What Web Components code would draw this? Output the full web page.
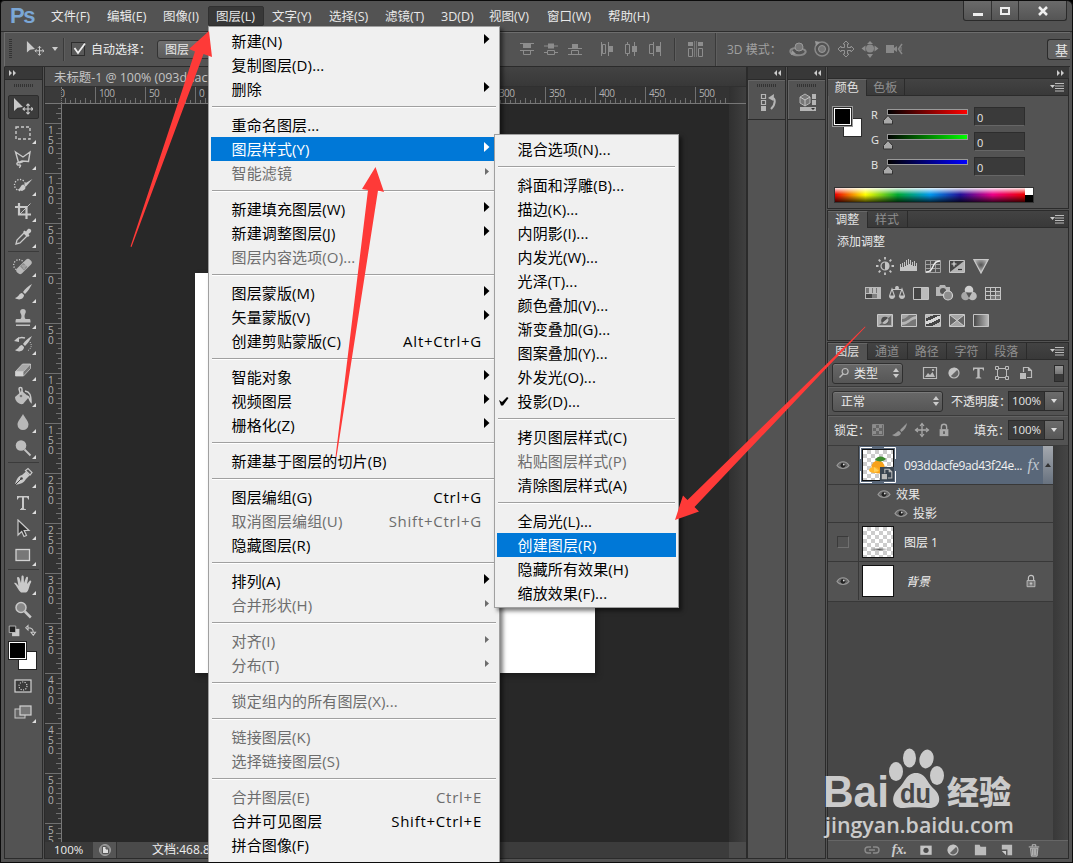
<!DOCTYPE html>
<html lang="zh-CN">
<head>
<meta charset="utf-8">
<title>Photoshop</title>
<style>
  html, body { margin: 0; padding: 0; background: #000; overflow: hidden; }
  body { font-family: "Open Sans", "Noto Sans CJK SC", sans-serif; font-size: 12px; color: #e8e8e8; }
</style>
</head>
<body>
<ps-app></ps-app>

<script>
// Icon bodies. Tools use a 20 unit box, everything else 16.
const ICONS = {
  move: [20, '<path d="M1 1v13l3.5-3.2L10 10z" fill="#c9c9c9"/><path d="M15 7v10M10 12h10M13.3 8.7 15 7l1.7 1.7M13.3 15.3 15 17l1.7-1.7M11.7 10.3 10 12l1.7 1.7M18.3 10.3 20 12l-1.7 1.7" fill="none" stroke="#c9c9c9" stroke-width="1.1"/>'],
  marquee: [20, '<rect x="3" y="4" width="14" height="12" fill="none" stroke="#c9c9c9" stroke-width="1.4" stroke-dasharray="3 2"/>'],
  lasso: [20, '<path d="M2.500 3l7.500 5 7-5-1.500 9.500-6.500-.5-3.500 1.500zM5.500 13.500c-2.500 0-2 3 .5 2.500s1.500 2 0 2.500M6 14l4-1.500" fill="none" stroke="#c9c9c9" stroke-width="1.400"/>'],
  quick: [20, '<circle cx="7" cy="10" r="5.5" fill="none" stroke="#d0d0d0" stroke-width="1.3" stroke-dasharray="1.3 1.5"/><path d="M19.500 4l-8.500 5 2 2.500zM10.500 9.500c-3 0-2.500 4-6 5.500 4 1.500 8 1 8-3.500z" fill="#c9c9c9"/>'],
  crop: [20, '<path d="M6 2v11.500h12M2 6h11.500v12" fill="none" stroke="#c9c9c9" stroke-width="2.200"/><path d="M7 13L17.500 2.500" stroke="#c9c9c9" stroke-width=".900"/>'],
  dropper: [20, '<path d="M3 17l1-4 7-7 3 3-7 7z" fill="none" stroke="#c9c9c9" stroke-width="1.3"/><path d="M10 5l1.500-1.500 1.500 1 2-2.500c2-1 4 1 3 3l-2.500 2 1 1.500L15 10z" fill="#c9c9c9"/>'],
  heal: [20, '<circle cx="6" cy="9" r="5.300" fill="none" stroke="#d0d0d0" stroke-width="1.200" stroke-dasharray="1.200 1.500"/><rect x="2" y="7" width="18" height="7" rx="3" transform="rotate(-44 11 10.500)" fill="#b8b8b8"/><path d="M10.500 7l4 4-3.500 3.500-4-4z" fill="#8d8d8d"/><path d="M10 9.500v1M12 9.500v1M11 11.500v1" stroke="#ddd"/>'],
  brush: [20, '<path d="M19 2c-4 2-7 5-9 8l2 2c3-3 5-6 7-10zM9 11c-3 0-3 4-7 5 4 3 9 1 9-3z" fill="#c9c9c9"/>'],
  stamp: [20, '<path d="M10 1c3 0 3.500 3 2 5-.8 2-.5 4 .5 5h4c1 0 1 2 1 3.500h-15c0-1.500 0-3.500 1-3.500h4c1-1 1.300-3 .5-5-1.500-2-1-5 2-5zM3 16.500h14V18H3z" fill="#bfbfbf"/>'],
  history: [20, '<path d="M19 2c-4 2-7 5-9 8l2 2c3-3 5-6 7-10zM9 11c-3 0-3 4-7 5 4 3 9 1 9-3z" fill="#c9c9c9"/><path d="M3 6c3-3 6-3 9-2" fill="none" stroke="#c9c9c9" stroke-width="1.500"/><path d="M1 7l5-4v5z" fill="#c9c9c9"/><path d="M17 8c3 4 0 8-3 9" fill="none" stroke="#c9c9c9" stroke-dasharray="1 1.200"/>'],
  eraser: [20, '<path d="M2.500 11.500l7-7.500h8l-7 7.500z" fill="#a8a8a8"/><path d="M10.500 11.500l7-7.500v4.500l-7 7.500z" fill="#777"/><path d="M2.500 11.500h8V16h-8z" fill="#d2d2d2"/><path d="M2.500 11.500l7-7.500h8v4.500l-7 7.500h-8zM2.500 11.500h8l7-7.500" fill="none" stroke="#d6d6d6" stroke-width=".700"/>'],
  bucket: [20, '<path d="M2 11l7-6 7 6-6 7c-4 1-8-3-8-7z" fill="#bdbdbd"/><path d="M8 10L6 3c0-2 3-2 3 0v4M12 5c5 1 6 4 6 11-2-2-1-5-4-6" fill="none" stroke="#c9c9c9" stroke-width="1.500"/><circle cx="8" cy="10" r="1.300" fill="#777"/>'],
  drop: [20, '<path d="M10 2c2 4 5.500 7 5.500 10.500a5.500 5.500 0 0 1-11 0C4.500 9 8 6 10 2z" fill="#b8b8b8"/>'],
  dodge: [20, '<circle cx="8" cy="7.500" r="5.300" fill="#bdbdbd"/><path d="M11.500 11.500l6 6" stroke="#c4c4c4" stroke-width="1.800"/>'],
  pen: [20, '<path d="M2 18c1-5 3-9 7-10l4-3.500 3.500 4L13 12c-2 4-6 5-11 6z" fill="#c9c9c9"/><path d="M2 18l6-6" stroke="#444"/><circle cx="8.500" cy="11.500" r="1.300" fill="#444"/><path d="M12.500 3.500l4.500 4.500 2-2.500-4-4z" fill="#555" stroke="#c9c9c9" stroke-width="1.200"/>'],
  type: [20, '<path d="M4 3h12v3.500h-.9c-.3-1.500-.9-2-2.200-2H11v10.600c0 .9.500 1.100 2 1.200v.7H7v-.7c1.500-.1 2-.3 2-1.200V4.500H7.100c-1.300 0-1.900.5-2.200 2H4z" fill="#c9c9c9"/>'],
  path: [20, '<path d="M5 1v15l3.700-3.500 2.300 5 2.500-1-2.300-5H16z" fill="#333" stroke="#c9c9c9" stroke-width="1.200"/>'],
  rect: [20, '<rect x="3" y="4.500" width="13.500" height="11" fill="#777" stroke="#d2d2d2" stroke-width="1.300"/>'],
  hand: [20, '<path d="M1 9c2-1 3 1 4.500 3L4 4c0-1.500 2-1.500 2.500 0L8 9l.5-6.500c0-1.500 2-1.500 2.200 0L11 9l2-5.500c.6-1.400 2.400-.8 2 1L14 10l2.500-3c1-1 2.300 0 1.500 1.500-2 3-2 9-5 10H8C5 16 4 12 1 9z" fill="#c9c9c9"/>'],
  zoom: [20, '<circle cx="8" cy="7.500" r="5" fill="#888" stroke="#c9c9c9" stroke-width="1.500"/><path d="M11.800 11.500l6 6" stroke="#c9c9c9" stroke-width="2.500"/>'],
  mask: [20, '<rect x="2" y="4" width="16" height="12" fill="#3a3a3a" stroke="#d2d2d2" stroke-width="1.200"/><circle cx="10" cy="10" r="4" fill="none" stroke="#ddd" stroke-width="1.100" stroke-dasharray="1.100 1.400"/>'],
  screen: [20, '<rect x="2" y="7" width="10" height="9" fill="#666" stroke="#c9c9c9"/><rect x="7" y="4" width="11" height="9" fill="#777" stroke="#d2d2d2" stroke-width="1.200"/>'],
  mini: [16, '<path d="M5 6h9v9H5z" fill="#c9c9c9"/><path d="M1.500 2.500h8v8h-8z" fill="#222" stroke="#c9c9c9"/>'],
  swap: [16, '<path d="M4 5c5 0 7 2 7 6M4 2L1 5l3 3zM8 11h6l-3 4z" fill="none" stroke="#c9c9c9" stroke-width="1.400"/>'],

  sun: [18, '<circle cx="9" cy="9" r="4" fill="none" stroke="#c4c4c4" stroke-width="1.200"/><path d="M9 5a4 4 0 0 1 0 8z" fill="#c4c4c4"/><path d="M9 0v2.500M9 15.500V18M0 9h2.500M15.500 9H18M2.700 2.700l1.700 1.700M13.600 13.600l1.700 1.700M2.700 15.300l1.700-1.700M13.600 4.400l1.700-1.700" stroke="#c4c4c4" stroke-width="1.800"/>'],
  levels: [18, '<path d="M0 14V7h1v3h1V6h1v4h1V5h1v4h1V3h1v5h1V2h1v5h1V3h1v5h1V5h1v4h1V4h1v5h1V6h1v8z" fill="#c4c4c4"/>'],
  curves: [16, '<path d="M.500 2.500h15v12H.500zM5.500 2.500v12M10.500 2.500v12M.500 6.500h15M.500 10.500h15" fill="none" stroke="#a2a2a2"/><path d="M1 14c9 0 5-11 14-11" fill="none" stroke="#eee" stroke-width="1.400"/>'],
  exposure: [16, '<path d="M.500 2.500h15v12H.500z" fill="#454545" stroke="#c4c4c4"/><path d="M15 3v11H1z" fill="#b5b5b5"/><path d="M2.500 6h5M5 3.500v5" stroke="#ddd" stroke-width="1.200"/><path d="M9 11.500h4" stroke="#333" stroke-width="1.200"/>'],
  vibrance: [16, '<defs><radialGradient id="v" cx=".5" cy=".4" r=".5"><stop stop-color="#555"/><stop offset="1" stop-color="#b5b5b5"/></radialGradient></defs><path d="M.800 1.500h14.400L8 15z" fill="url(#v)" stroke="#c9c9c9" stroke-width="1.200"/>'],
  hue: [16, '<path d="M0 2h16v12H0z" fill="#bbb"/><path d="M1 3h3v5H1zM7 3h1v5H7zM11 3h1v5h-1z" fill="#777"/><path d="M1 9h6v4H1z" fill="#444"/><path d="M7 9h5v4H7z" fill="#808080"/>'],
  balance: [16, '<path d="M8 1v3M3 4.500h10M3 4l-2.500 7h5zM13 4l-2.500 7h5z" fill="none" stroke="#c4c4c4" stroke-width="1.100"/><path d="M0 11h6c0 4-6 4-6 0zM10 11h6c0 4-6 4-6 0z" fill="#c4c4c4"/><circle cx="8" cy="3" r="2" fill="#c4c4c4"/>'],
  bw: [16, '<path d="M.500 2.500h15v12H.500z" fill="#444" stroke="#c4c4c4"/><path d="M8 3h7v11H8z" fill="#bbb"/>'],
  photo: [18, '<path d="M0 3h3l1-2h5l1 2h4v9H0z" fill="#b5b5b5"/><circle cx="7" cy="7" r="3" fill="#555"/><circle cx="12" cy="11.500" r="4.500" fill="#8d8d8d" stroke="#d4d4d4" stroke-width="1.200"/>'],
  mixer: [16, '<circle cx="8" cy="5" r="4.300" fill="#d0d0d0"/><circle cx="4.500" cy="11" r="4.300" fill="#a8a8a8"/><circle cx="11.500" cy="11" r="4.300" fill="#bcbcbc"/><path d="M5 7.500h6L8 13z" fill="#555"/>'],
  lookup: [16, '<path d="M0 2h16v13H0z" fill="#c4c4c4"/><path d="M1 3h4v3H1zM6 3h4v3H6zM11 3h4v3h-4zM1 7h4v3H1zM6 7h4v3H6zM1 11h4v3H1z" fill="#555"/><path d="M11 7h4v3h-4zM6 11h4v3H6zM11 11h4v3h-4z" fill="#777"/>'],
  invert: [16, '<path d="M.500 2.500h15v12H.500z" fill="#aaa" stroke="#c9c9c9"/><path d="M2 13L14 4v9z" fill="#666"/><circle cx="8" cy="8.500" r="3.800" fill="#4b4b4b"/><path d="M5 11l6-5a4 4 0 0 1-6 5" fill="#bbb"/>'],
  poster: [16, '<path d="M.500 2.500h15v12H.500z" fill="#777" stroke="#c9c9c9"/><path d="M1 10c6 0 8-5 14-6v3c-6 1-8 6-14 6z" fill="#b5b5b5"/><path d="M1 7c3 0 5-2 7-4H1z" fill="#a5a5a5"/>'],
  thresh: [16, '<path d="M.500 2.500h15v12H.500z" fill="#444" stroke="#c9c9c9"/><path d="M1 9h2V8h3V7h2V6h2V5h2V4h3v3h-2v1h-2v1H9v1H7v1H4v1H1z" fill="#d8d8d8"/><path d="M1 3h7v1H5v1H3v1H1z" fill="#bbb"/><path d="M15 10v4H8v-1h2v-1h2v-1h2v-1z" fill="#bbb"/>'],
  selcolor: [16, '<path d="M.500 2.500h15v12H.500z" fill="#a4a4a4" stroke="#c9c9c9"/><path d="M1 3l7 5.500L1 14zM15 3L8 8.500l7 5.500z" fill="#666"/><path d="M1 3l14 11M15 3L1 14" stroke="#ddd" stroke-width=".800"/>'],
  gradmap: [16, '<defs><linearGradient id="g"><stop stop-color="#444"/><stop offset="1" stop-color="#bbb"/></linearGradient></defs><path d="M.500 2.500h15v12H.500z" fill="url(#g)" stroke="#c4c4c4"/>'],

  search: [16, '<circle cx="9.500" cy="6" r="4" fill="none" stroke="#bbb" stroke-width="1.600"/><path d="M7 9l-5 5" stroke="#bbb" stroke-width="2"/>'],
  image: [16, '<path d="M1.500 2.500h13v11h-13z" fill="none" stroke="#bbb" stroke-width="1.200"/><path d="M3 12l3-4 2 2 2.500-3L13 12z" fill="#bbb"/><circle cx="11" cy="5" r="1.100" fill="#bbb"/>'],
  adjust: [16, '<circle cx="8" cy="8" r="5" fill="#666" stroke="#bdbdbd" stroke-width="1.200"/><path d="M4.200 11.800A5.400 5.400 0 0 1 11.800 4.200z" fill="#c4c4c4"/>'],
  smallT: [16, '<path d="M3 2.500h11v3h-.9c-.2-1.200-.8-1.500-1.800-1.500H9.700v7.600c0 .8.400 1 1.600 1.100v.8H5.700v-.8c1.200-.1 1.600-.3 1.600-1.100V4H5.700c-1 0-1.600.3-1.800 1.500H3z" fill="#bbb"/>'],
  shape: [16, '<path d="M3.500 3.500h9v9h-9z" fill="none" stroke="#bbb"/><path d="M1.500 1.500h3v3h-3zM11.500 1.500h3v3h-3zM1.500 11.500h3v3h-3zM11.500 11.500h3v3h-3z" fill="#535353" stroke="#bbb"/>'],
  smart: [16, '<path d="M5.500 7V2.500h5l3 3v7H9M10.500 2.500v3h3" fill="none" stroke="#bbb" stroke-width="1.200"/><path d="M2 8h6v6H2z" fill="#bbb"/>'],
  checker: [16, '<path d="M2.500 2.500h11v11h-11z" fill="#666" stroke="#888"/><path d="M3 3h3v3H3zM9 3h3v3H9zM6 6h3v3H6zM3 9h3v3H3zM9 9h3v3H9z" fill="#8d8d8d"/>'],
  lockbrush: [16, '<path d="M15 1L8 8l1.500 2c3-2 5-5 5.500-9zM7 9c-2 0-3 3-7 4 3 2 8 2 9-2z" fill="#999"/>'],
  lockmove: [16, '<path d="M8 2v12M2 8h12" stroke="#aaa" stroke-width="1.300"/><path d="M6 4l2-2.500L10 4M6 12l2 2.500 2-2.500M4 6L1.500 8 4 10M12 6l2.500 2-2.500 2" fill="none" stroke="#aaa" stroke-width="1.200"/>'],
  lock: [16, '<path d="M3 7h10v8H3z" fill="#aaa"/><path d="M5 7V4.500a3 3 0 0 1 6 0V7" fill="none" stroke="#aaa" stroke-width="1.600"/><path d="M8 9.500v3" stroke="#444" stroke-width="1.500"/>'],
  openlock: [16, '<path d="M3.500 7.500h9v7h-9z" fill="#777" stroke="#c4c4c4"/><path d="M5 7V4.500a3 3 0 0 1 6 0V7" fill="none" stroke="#c4c4c4" stroke-width="1.300"/><path d="M8 9v4M6.500 11h3" stroke="#ccc"/>'],
  eye: [16, '<path d="M2 8.500C5 3.500 11 3.500 14 8.500 11 12.500 5 12.500 2 8.500z" fill="#676767" stroke="#999" stroke-width="1.200"/><circle cx="8" cy="8.300" r="2.400" fill="#222"/><circle cx="8.800" cy="7.500" r=".900" fill="#ddd"/>'],
  link: [16, '<path d="M7 5H4a3 3 0 0 0 0 6h3M9 5h3a3 3 0 0 1 0 6H9M5 8h6" fill="none" stroke="#8b8b8b" stroke-width="1.400"/>'],
  addmask: [16, '<path d="M1.500 3h13v10.500h-13z" fill="#c4c4c4"/><circle cx="8" cy="8.300" r="3" fill="#4b4b4b"/>'],
  folder: [16, '<path d="M2 3h5l1 2h6v9H2z" fill="#bbb"/>'],
  newlayer: [16, '<path d="M3 3h11v11H9V8H3z" fill="#bbb"/><path d="M3 9.500h4.500V14z" fill="#ccc"/>'],
  trash: [16, '<path d="M4 6h8.500l-1 9h-6.500z" fill="#777" stroke="#c4c4c4"/><path d="M2 4.500h12M6 4V2h4v2M6.500 7v7M8.250 7v7M10 7v7" fill="none" stroke="#c9c9c9"/>'],

  alignT: [16, '<path d="M1 2.500h14" stroke="#8d8d8d"/><path d="M4 3h8v4H4z" fill="#8d8d8d"/><path d="M1 9.500h4M11 9.500h4" stroke="#8d8d8d"/><path d="M4.500 9.500h7v4h-7z" fill="none" stroke="#8d8d8d"/>'],
  alignM: [16, '<path d="M1 5h14" stroke="#8d8d8d"/><path d="M5 2.500h6v5H5z" fill="#8d8d8d"/><path d="M1 11.500h4M11 11.500h4" stroke="#8d8d8d"/><path d="M4.500 9.500h7v4h-7z" fill="none" stroke="#8d8d8d"/>'],
  alignB: [16, '<path d="M1 7.500h14M1 13.500h14" stroke="#8d8d8d"/><path d="M5 3h6v4H5z" fill="#8d8d8d"/><path d="M4.500 9.500h7v4h-7z" fill="none" stroke="#8d8d8d"/>'],
  alignL: [16, '<path d="M2.500 1v14M9.500 1v14" stroke="#8d8d8d"/><path d="M3.500 3.500h3v9h-3z" fill="none" stroke="#8d8d8d"/><path d="M10 5h4v6h-4z" fill="#8d8d8d"/>'],
  alignC: [16, '<path d="M4.500 1v14M11.500 1v14" stroke="#8d8d8d"/><path d="M2.500 3.500h4v9h-4z" fill="#535353" stroke="#8d8d8d"/><path d="M9 5h5v6H9z" fill="#8d8d8d"/>'],
  alignR: [16, '<path d="M6.500 1v14M13.500 1v14" stroke="#8d8d8d"/><path d="M2.500 3.500h4v9h-4z" fill="#535353" stroke="#8d8d8d"/><path d="M9 5h4v6H9z" fill="#8d8d8d"/>'],
  distribute: [18, '<path d="M8.500 1v16M10.500 1v16" stroke="#777"/><path d="M2 2h5v4H2zM12 2h5v4h-5z" fill="#8d8d8d"/><path d="M2.500 8.500h4v8h-4zM12.500 8.500h4v8h-4z" fill="none" stroke="#8d8d8d"/>'],
  orbit: [18, '<path d="M7 8C3 8 0 10 2 13c3 3 12 3 14 0 2-2-1-4-3-4" fill="none" stroke="#888" stroke-width="2"/><circle cx="10" cy="7" r="4" fill="#777" stroke="#999"/><path d="M3 10l4 4-5 1z" fill="#999"/>'],
  roll: [18, '<circle cx="9" cy="9" r="7" fill="none" stroke="#888" stroke-width="1.500"/><circle cx="9" cy="9" r="3.500" fill="#777" stroke="#999"/><path d="M2 1l5 1-4 4z" fill="#999"/>'],
  pan: [18, '<path d="M9 1l3 3h-1.500v3.500H14V6l3 3-3 3v-1.500h-3.500V14H12l-3 3-3-3h1.500v-3.500H4V12L1 9l3-3v1.500h3.500V4H6z" fill="none" stroke="#929292"/>'],
  slide: [18, '<circle cx="9" cy="8.500" r="4" fill="#888"/><path d="M6 4l3-3 3 3zM6 14l3 4 3-4zM4.500 5.500v6L.500 8.500zM13.500 5.500v6l4-3z" fill="#8d8d8d"/>'],
  camera: [18, '<path d="M1 5h8v8H1zM9 8l3-2v6l-3-2z" fill="#888"/><path d="M17 4l-3.500 5 3.500 5" fill="none" stroke="#888" stroke-width="1.500"/><path d="M16 7v4" stroke="#888"/>'],
  hist2: [18, '<path d="M2.500 1.500h4v4h-4zM2.500 7.500h4v4h-4z" fill="none" stroke="#b5b5b5" stroke-width="1.200"/><path d="M2 13h5v5H2z" fill="#b5b5b5"/><path d="M12 5c5-1 5 6 0 11" fill="none" stroke="#b5b5b5" stroke-width="2"/><path d="M9 5l6-4-.500 7z" fill="#b5b5b5"/>'],
  props: [18, '<path d="M1 4l5-3 5 3v6l-5 3-5-3z" fill="#777" stroke="#b5b5b5"/><path d="M1 4l5 3 5-3M6 7v6" fill="none" stroke="#c4c4c4"/><path d="M13 1h4v5h-4zM13 7h4v5h-4zM1 14h16v4H1z" fill="#b5b5b5"/><path d="M12 15h4l-2 2z" fill="#333"/>']
};

class PsIcon extends HTMLElement {
  connectedCallback() {
    const root = this.attachShadow({ mode: 'open' });
    const [box, body] = ICONS[this.getAttribute('name')];
    const size = this.getAttribute('size') || box;
    root.innerHTML = `
      <style>
        :host { display: inline-flex; flex: none; }
        svg { display: block; }
      </style>
      <svg width="${size}" height="${size}" viewBox="0 0 ${box} ${box}">${body}</svg>
    `;
  }
}

class PsMenubar extends HTMLElement {
  connectedCallback() {
    const items = [['文件(F)', 56], ['编辑(E)', 56], ['图像(I)', 53], ['图层(L)', 56], ['文字(Y)', 57], ['选择(S)', 56],
      ['滤镜(T)', 56], ['3D(D)', 48], ['视图(V)', 58], ['窗口(W)', 61], ['帮助(H)', 60]];
    this.attachShadow({ mode: 'open' }).innerHTML = `
      <style>
        :host { display: flex; height: 31px; border-bottom: 1px solid #2d2d2d; box-sizing: border-box; }
        .logo { width: 42px; padding-left: 9px; box-sizing: border-box; font: bold 22px/29px "Liberation Sans", sans-serif; color: #7ba7d6; letter-spacing: -1.5px; }
        .item { box-sizing: border-box; height: 20px; margin-top: 5px; padding-left: 8px; font-size: 12.5px; line-height: 21px; white-space: nowrap; }
        .item.open { background: #383838; border: 1px solid #303030; border-radius: 2px; padding-left: 7px; line-height: 19px; }
        .win { margin-left: auto; margin-right: 5px; display: flex; height: 19px; border: 1px solid #2a2a2a; border-top: 0; border-radius: 0 0 3px 3px; background: linear-gradient(#6a6a6a, #555); }
        .win span { width: 28px; display: flex; justify-content: center; align-items: center; border-right: 1px solid #333; box-sizing: border-box; }
        .win span + span { width: 27px; }
        .win span:last-child { width: 47px; border: 0; }
      </style>
      <div class="logo">Ps</div>
      ${items.map(([t, w]) => `<div class="item ${t === '图层(L)' ? 'open' : ''}" style="width:${w}px">${t}</div>`).join('')}
      <div class="win">
        <span><svg width="12" height="12"><path d="M1 8h10v3H1z" fill="#eee"/></svg></span>
        <span><svg width="12" height="12"><path d="M2 3h8v6H2z" fill="none" stroke="#eee" stroke-width="2"/></svg></span>
        <span><svg width="12" height="12"><path d="M2 2l8 8M10 2l-8 8" stroke="#eee" stroke-width="2.500"/></svg></span>
      </div>
    `;
  }
}

class PsOptions extends HTMLElement {
  connectedCallback() {
    this.attachShadow({ mode: 'open' }).innerHTML = `
      <style>
        :host { display: flex; align-items: center; height: 35px; padding-bottom: 1px; margin: 0 2px 0 3px; border-top: 1px solid #6d6d6d; border-left: 1px solid #6d6d6d; border-bottom: 1px solid #2b2b2b; box-sizing: border-box; overflow: hidden; white-space: nowrap; }
        .grip { width: 3px; height: 20px; margin-left: 4px; background: repeating-linear-gradient(#333 0 1px, transparent 1px 2px); }
        .move { margin: 0 0 0 14px; }
        .tri { width: 0; border: 3px solid transparent; border-top: 4px solid #ccc; border-bottom: 0; margin: 0 5px 0 8px; }
        .sep { width: 1px; height: 23px; background: #3a3a3a; border-right: 1px solid #5e5e5e; }
        .check { width: 12px; height: 12px; margin: 0 6px 0 6px; background: #595959; border: 1px solid #2d2d2d; display: block; overflow: visible; }
        .label { width: 66px; color: #eee; }
        .combo { width: 350px; }
        .combo span { display: block; width: 120px; height: 19px; line-height: 17px; padding-left: 7px; background: linear-gradient(#707070, #5c5c5c); border: 1px solid #333; border-radius: 3px; box-sizing: border-box; }
        .icons { display: flex; align-items: center; }
        .three { color: #a0a0a0; margin: 0 18px 0 10px; width: 44px; }
        .ws { margin-left: auto; width: 23px; height: 21px; line-height: 20px; padding-left: 7px; box-sizing: border-box; overflow: hidden; border: 1px solid #2b2b2b; border-right: 0; border-radius: 3px 0 0 3px; background: #626262; font-size: 13px; }
      </style>
      <div class="grip"></div>
      <ps-icon class="move" name="move" size="18"></ps-icon>
      <div class="tri"></div>
      <div class="sep"></div>
      <svg class="check" width="12" height="12"><path d="M2.500 5l3.500 5 7-9.500" fill="none" stroke="#eee" stroke-width="1.800"/></svg>
      <div class="label">自动选择：</div>
      <div class="combo"><span>图层</span></div>
      <div class="icons">
        <div style="width:12px"></div>
        <ps-icon name="alignT"></ps-icon><ps-icon name="alignM" style="margin:0 8px"></ps-icon><ps-icon name="alignB"></ps-icon>
        <ps-icon name="alignL" style="margin-left:16px"></ps-icon><ps-icon name="alignC" style="margin:0 8px"></ps-icon><ps-icon name="alignR"></ps-icon>
        <div class="sep" style="margin:0 10px 0 11px"></div>
        <ps-icon name="distribute"></ps-icon>
        <div class="sep" style="margin-left:11px;height:33px"></div>
      </div>
      <div class="three">3D 模式：</div>
      <div class="icons" style="gap:6px">
        <ps-icon name="orbit"></ps-icon><ps-icon name="roll"></ps-icon><ps-icon name="pan"></ps-icon><ps-icon name="slide"></ps-icon><ps-icon name="camera"></ps-icon>
      </div>
      <div class="ws">基</div>
    `;
  }
}

class PsToolbox extends HTMLElement {
  connectedCallback() {
    const groups = [
      ['move', 'marquee', 'lasso', 'quick', 'crop', 'dropper'],
      ['heal', 'brush', 'stamp', 'history', 'eraser', 'bucket', 'drop', 'dodge'],
      ['pen', 'type', 'path', 'rect'],
      ['hand', 'zoom']
    ];
    const cell = n => `<div class="tool ${n === 'move' ? 'on' : ''} ${n === 'zoom' ? 'single' : ''}"><ps-icon name="${n}"></ps-icon></div>`;
    this.attachShadow({ mode: 'open' }).innerHTML = `
      <style>
        :host { display: block; width: 39px; box-sizing: border-box; border: 1px solid #2b2b2b; border-top: 0; }
        .head { height: 12px; background: #383838; border-bottom: 1px solid #2b2b2b; }
        .head svg { display: block; padding: 2px 0 0 3px; }
        .grip { height: 3px; width: 20px; margin: 4px auto 8px; background: repeating-linear-gradient(90deg, #333 0 1px, transparent 1px 2px); }
        .tool { position: relative; height: 26px; padding-right: 2px; display: flex; align-items: center; justify-content: center; }
        .tool.on { height: 22px; margin: 1px 3px; background: #3c3c3c; border: 1px solid #2d2d2d; border-radius: 2px; }
        .tool:not(.on):not(.single)::after { content: ""; position: absolute; right: 6px; bottom: 2px; border: 2px solid; border-color: transparent #ddd #ddd transparent; }
        hr { border: 0; height: 1px; background: #3b3b3b; margin: 1px 3px; }
        .mini { display: flex; justify-content: space-between; padding: 1px 5px 0 3px; height: 15px; }
        .colors { position: relative; height: 34px; }
        .colors i { position: absolute; width: 17px; height: 17px; border: 1px solid #222; box-sizing: content-box; }
        .bg { left: 13px; top: 12px; background: #fff; }
        .fg { left: 3px; top: 2px; background: #000; box-shadow: inset 0 0 0 1px #fff; }
      </style>
      <div class="head"><svg width="14" height="9"><path d="M1 1l3 3-3 3zM5 1l3 3-3 3z" fill="#ccc"/></svg></div>
      <div class="grip"></div>
      ${groups.map(g => g.map(cell).join('')).join('<hr>')}
      <div class="mini"><ps-icon name="mini" size="13"></ps-icon><ps-icon name="swap" size="12"></ps-icon></div>
      <div class="colors"><i class="bg"></i><i class="fg"></i></div>
      <div class="tool single"><ps-icon name="mask"></ps-icon></div>
      <div class="tool"><ps-icon name="screen"></ps-icon></div>
    `;
  }
}

class PsRuler extends HTMLElement {
  connectedCallback() {
    const vertical = this.hasAttribute('vertical');
    const len = vertical ? 738 : 667;
    const zero = vertical ? 169 : 133;
    const values = vertical ? [-150, -100, -50, 0, 50, 100, 150, 200, 250, 300, 350, 400, 450, 500, 550] : [-150, -100, -50, 0, 300, 350, 400, 450, 500];
    let out = '';
    for (let p = zero % 5; p < len; p += 5) {
      const d = p - zero;
      const h = d % 50 === 0 ? 16 : d % 10 === 0 ? 5 : 3;
      out += vertical ? `<path d="M${16 - h} ${p + .5}h${h}"/>` : `<path d="M${p + .5} ${16 - h}v${h}"/>`;
    }
    for (const v of values) {
      const p = zero + v;
      if (vertical) {
        String(Math.abs(v)).split('').forEach((c, i) => {
          if (p + 11 + i * 10 < len + 5) out += `<text x="3" y="${p + 11 + i * 10}">${c}</text>`;
        });
      } else {
        out += `<text x="${p + 4}" y="10" textLength="${String(Math.abs(v)).length * 5.3}">${Math.abs(v)}</text>`;
      }
    }
    this.attachShadow({ mode: 'open' }).innerHTML = `
      <style>
        :host { display: block; overflow: hidden; background: #333; }
        svg { display: block; }
        path { stroke: #707070; }
        text { fill: #b0b0b0; font: 10px "Open Sans", sans-serif; }
      </style>
      <svg width="${vertical ? 16 : len}" height="${vertical ? len : 16}">${out}</svg>
    `;
  }
}

class PsDocument extends HTMLElement {
  connectedCallback() {
    this.attachShadow({ mode: 'open' }).innerHTML = `
      <style>
        :host { display: flex; flex-direction: column; width: 703px; margin-left: 1px; box-sizing: border-box; border: 1px solid #2b2b2b; border-top: 0; }
        .tabs { height: 20px; background: linear-gradient(#434343, #383838); border-bottom: 1px solid #303030; box-sizing: border-box; }
        .tab { width: 230px; height: 19px; line-height: 21px; padding-left: 9px; box-sizing: border-box; background: #4d4d4d; color: #c4c4c4; font-size: 12.4px; white-space: nowrap; overflow: hidden; }
        .top { display: flex; height: 16px; border-bottom: 1px solid #777; }
        .corner { width: 16px; background: #3a3a3a; border-right: 1px dotted #777; }
        .top .fill, .side { width: 17px; background: linear-gradient(90deg, #303030, #3f3f3f); }
        .mid { display: flex; flex: 1; min-height: 0; }
        .left { width: 16px; border-right: 1px solid #777; }
        .canvas { flex: 1; background: #282828; padding: 169px 0 0 133px; }
        .paper { width: 400px; height: 400px; background: #fff; box-shadow: 2px 3px 5px #1c1c1c; }
        .status { display: flex; height: 16px; line-height: 16px; background: #4a4a4a; color: #eee; }
        .pct { width: 48px; padding-left: 9px; box-sizing: border-box; background: #3a3a3a; font-size: 11.5px; }
        .go { width: 23px; display: flex; align-items: center; justify-content: center; background: #555; border-right: 1px solid #333; }
        .info { width: 60px; padding-left: 35px; flex: none; white-space: nowrap; overflow: hidden; }
        .rest { flex: 1; background: #3c3c3c; }
        .end { width: 17px; background: #4b4b4b; }
      </style>
      <div class="tabs"><div class="tab">未标题-1 @ 100% (093ddacf</div></div>
      <div class="top"><div class="corner"></div><ps-ruler style="flex:1"></ps-ruler><div class="fill"></div></div>
      <div class="mid">
        <div class="left"><ps-ruler vertical></ps-ruler></div>
        <div class="canvas"><div class="paper"></div></div>
        <div class="side"></div>
      </div>
      <div class="status">
        <div class="pct">100%</div>
        <div class="go"><svg width="14" height="14"><circle cx="7" cy="7" r="5.500" fill="#8a8a8a" stroke="#a0a0a0"/><path d="M4.500 3.500h3.500l2.500 2.500v4.500h-6zM8 3.500v2.500h2.500" fill="#ddd" stroke="#555"/></svg></div>
        <div class="info">文档:468.8</div>
        <div class="rest"></div><div class="end"></div>
      </div>
    `;
  }
}

class PsStrip extends HTMLElement {
  connectedCallback() {
    this.attachShadow({ mode: 'open' }).innerHTML = `
      <style>
        :host { display: block; width: 39px; margin-right: 1px; box-sizing: border-box; border: 1px solid #2b2b2b; border-top: 0; }
        .head { height: 12px; background: #383838; border-bottom: 1px solid #2b2b2b; display: flex; justify-content: flex-end; }
        .head svg { margin: 2px 3px 0 0; }
        .box { height: 40px; border-bottom: 1px solid #2b2b2b; box-shadow: inset 1px 1px #666; box-sizing: border-box; display: flex; flex-direction: column; align-items: center; }
        .grip { height: 3px; width: 20px; margin: 4px 0 6px; background: repeating-linear-gradient(90deg, #333 0 1px, transparent 1px 2px); }
        ::slotted(ps-icon) { margin-left: 2px; }
      </style>
      <div class="head"><svg width="9" height="8"><path d="M4 1v6L1 4zM8 1v6L5 4z" fill="#ccc"/></svg></div>
      <div class="box"><div class="grip"></div><slot></slot></div>
    `;
  }
}

class PsPanel extends HTMLElement {
  connectedCallback() {
    const tabs = this.getAttribute('tabs').split(',');
    const w = this.getAttribute('tab-width') || 39.75;
    this.attachShadow({ mode: 'open' }).innerHTML = `
      <style>
        :host { display: flex; flex-direction: column; box-sizing: border-box; border: 1px solid #2b2b2b; }
        .tabs { display: flex; flex: none; height: 17px; background: linear-gradient(#434343, #383838); }
        .tab { flex: none; box-sizing: border-box; line-height: 17px; text-align: center; color: #8f8f8f; border-right: 1px solid #2b2b2b; border-bottom: 1px solid #2b2b2b; }
        .tab.on { background: #535353; color: #e2e2e2; border-top: 1px solid #666; line-height: 15px; border-bottom: 0; }
        .fill { flex: 1; border-bottom: 1px solid #2b2b2b; text-align: right; }
        .fill svg { margin: 4px 4px 0 0; }
        .body { flex: 1; min-height: 0; background: #535353; box-shadow: inset 1px 0 #5f5f5f; }
      </style>
      <div class="tabs">
        ${tabs.map((t, i) => `<div class="tab ${i ? '' : 'on'}" style="width:${w}px">${t}</div>`).join('')}
        <div class="fill"><svg width="14" height="9"><path d="M0 2h5L2.500 5z" fill="#ccc"/><path d="M5 .500h9M5 3h9M5 5.500h9M5 8h9" stroke="#bbb"/></svg></div>
      </div>
      <div class="body"><slot></slot></div>
    `;
  }
}

class PsColor extends HTMLElement {
  connectedCallback() {
    const rows = [['R', '#f00'], ['G', '#0f0'], ['B', '#00f']];
    this.attachShadow({ mode: 'open' }).innerHTML = `
      <style>
        :host { display: block; padding: 11px 0 0 6px; }
        .main { display: flex; }
        .sw { position: relative; width: 37px; }
        .sw i { position: absolute; border: 1px solid #2b2b2b; width: 17px; height: 17px; }
        .b { left: 9px; top: 11px; background: #fff; }
        .f { left: -1px; top: 0; background: #000; box-shadow: inset 0 0 0 1px #fff, 0 0 0 1px #999; }
        .row { display: flex; height: 25px; }
        .row b { font-weight: 400; width: 16px; line-height: 16px; font-size: 11px; }
        .bar { width: 79px; height: 4px; border: 1px solid #999; margin-top: 2px; }
        .bar svg { display: block; margin: 5px 0 0 -6px; }
        .num { width: 49px; height: 17px; margin-left: 6px; background: #3a3a3a; border: 1px solid #2d2d2d; border-bottom-color: #666; box-sizing: content-box; line-height: 19px; text-indent: 2px; font-size: 11px; }
        .spec { width: 198px; height: 14px; margin: 5px 0 0 0; border: 1px solid #333; display: flex; }
        .rgb { flex: 1; background: linear-gradient(rgba(255,255,255,.9), rgba(255,255,255,0) 45%, rgba(0,0,0,0) 50%, rgba(0,0,0,.75)), linear-gradient(90deg, #e00, #ff0 16%, #0a3 33%, #09e 50%, #219 66%, #e08 83%, #e00); }
        .bw { width: 8px; background: linear-gradient(#fff 50%, #000 50%); }
      </style>
      <div class="main">
        <div class="sw"><i class="b"></i><i class="f"></i></div>
        <div>${rows.map(([n, c]) => `
          <div class="row"><b>${n}</b>
            <div class="bar" style="background:linear-gradient(90deg,#000,${c})"><svg width="12" height="10"><path d="M6 .500l4.500 5V9h-9V5.500z" fill="#aaa" stroke="#333"/></svg></div>
            <div class="num">0</div></div>`).join('')}
        </div>
      </div>
      <div class="spec"><div class="rgb"></div><div class="bw"></div></div>
    `;
  }
}

class PsAdjust extends HTMLElement {
  connectedCallback() {
    const rows = [
      ['sun', 'levels', 'curves', 'exposure', 'vibrance'],
      ['hue', 'balance', 'bw', 'photo', 'mixer', 'lookup'],
      ['invert', 'poster', 'thresh', 'selcolor', 'gradmap']
    ];
    this.attachShadow({ mode: 'open' }).innerHTML = `
      <style>
        :host { display: block; padding-top: 4px; }
        .t { padding-left: 9px; line-height: 19px; height: 20px; }
        .row { display: flex; height: 27px; justify-content: center; align-items: center; padding-right: 34px; padding-left: 4px; }
        .row span { width: 24px; display: flex; justify-content: center; }
      </style>
      <div class="t">添加调整</div>
      ${rows.map(r => `<div class="row">${r.map(n => `<span><ps-icon name="${n}"></ps-icon></span>`).join('')}</div>`).join('')}
    `;
  }
}

class PsSelect extends HTMLElement {
  connectedCallback() {
    this.attachShadow({ mode: 'open' }).innerHTML = `
      <style>
        :host { display: flex; align-items: center; box-sizing: border-box; height: 21px; border: 1px solid #2f2f2f; border-radius: 3px; background: linear-gradient(#686868, #565656); box-shadow: inset 0 1px #7a7a7a; padding: 0 3px 0 5px; }
        svg { margin-left: auto; }
      </style>
      <slot></slot><svg width="6" height="10"><path d="M0 4l3-4 3 4zM0 6l3 4 3-4z" fill="#ccc"/></svg>
    `;
  }
}

class PsNumber extends HTMLElement {
  connectedCallback() {
    this.attachShadow({ mode: 'open' }).innerHTML = `
      <style>
        :host { display: flex; width: 56px; height: 20px; box-sizing: border-box; border: 1px solid #2b2b2b; line-height: 18px; }
        .v { width: 35px; background: #3a3a3a; text-align: center; font-size: 11.5px; }
        .d { flex: 1; display: flex; align-items: center; justify-content: center; background: linear-gradient(#6c6c6c, #575757); border-left: 1px solid #2b2b2b; }
      </style>
      <div class="v"><slot></slot></div>
      <div class="d"><svg width="6" height="4"><path d="M0 0h6L3 4z" fill="#ddd"/></svg></div>
    `;
  }
}

class PsLayer extends HTMLElement {
  connectedCallback() {
    const eye = this.hasAttribute('off') ? '<i class="off"></i>' : '<ps-icon name="eye"></ps-icon>';
    this.attachShadow({ mode: 'open' }).innerHTML = `
      <style>
        :host { display: flex; box-sizing: border-box; height: 39px; border-bottom: 1px solid #383838; background: #535353; color: #f0f0f0; }
        .vis { width: 30px; flex: none; display: flex; align-items: center; justify-content: center; border-right: 1px solid #383838; }
        .off { width: 10px; height: 10px; border: 1px solid #666; border-color: #3a3a3a #707070 #707070 #3a3a3a; }
        .row { flex: 1; display: flex; align-items: center; padding-left: 3px; white-space: nowrap; }
        :host([selected]) .row { background: #596779; }
        :host([selected]) .name { letter-spacing: -.43px; padding-top: 1px; }
        .name { margin-left: 10px; flex: 1; }
      </style>
      <div class="vis">${eye}</div>
      <div class="row"><slot name="thumb"></slot><div class="name"><slot></slot></div><slot name="end"></slot></div>
    `;
  }
}

class PsLayers extends HTMLElement {
  connectedCallback() {
    this.attachShadow({ mode: 'open' }).innerHTML = `
      <style>
        :host { display: flex; flex-direction: column; height: 100%; }
        .bar { flex: none; display: flex; align-items: center; box-sizing: border-box; padding: 0 4px; height: 29px; border-bottom: 1px solid #3b3b3b; box-shadow: 0 1px #626262; }
        .icons { display: flex; gap: 8px; margin-left: 19px; }
        .switch { width: 8px; height: 15px; margin-left: auto; border: 1px solid #2b2b2b; background: linear-gradient(#999, #777 50%, #393939 50%); }
        .area { flex: 1; min-height: 0; display: flex; background: #474747; }
        .list { flex: 1; min-width: 0; }
        .scroll { flex: none; width: 15px; background: linear-gradient(90deg, #393939, #454545); }
        .thumb { position: relative; display: block; width: 30px; height: 30px; border: 1px solid #111; }
        .alpha { background: repeating-conic-gradient(#ccc 0 25%, #fff 0 50%) 0 0 / 8px 8px; }
        .frame { position: absolute; left: -3px; top: -3px; }
        .badge { position: absolute; right: -1px; bottom: -1px; background: #394450; }
        .orange { position: absolute; left: 6px; top: 6px; }
        .fx { font: italic 16px "Liberation Serif", serif; color: #c0c8d0; margin-right: 2px; }
        .handle { width: 10px; height: 38px; margin-left: 2px; display: flex; align-items: center; justify-content: center; background: linear-gradient(#a4a8ae, #68727f); }
        .effects { display: flex; height: 37px; border-bottom: 1px solid #383838; background: #535353; }
        .effects .gut { width: 30px; border-right: 1px solid #383838; }
        .effects p { margin: 0; height: 18px; display: flex; align-items: center; gap: 4px; padding-left: 17px; }
        .effects p + p { padding-left: 34px; height: 19px; }
        .foot { flex: none; height: 17px; display: flex; align-items: center; padding-left: 31px; border-top: 1px solid #666; background: #535353; }
        .foot span { width: 26.9px; display: flex; justify-content: center; color: #ccc; }
      </style>
      <div class="bar" style="height:27px">
        <ps-select style="width:71px;gap:4px"><ps-icon name="search" size="12"></ps-icon>类型</ps-select>
        <div class="icons"><ps-icon name="image"></ps-icon><ps-icon name="adjust"></ps-icon><ps-icon name="smallT"></ps-icon><ps-icon name="shape"></ps-icon><ps-icon name="smart"></ps-icon></div>
        <div class="switch"></div>
      </div>
      <div class="bar"><ps-select style="width:111px">&nbsp;正常</ps-select><span style="margin-left:8px;width:57px;white-space:nowrap">不透明度：</span><ps-number>100%</ps-number></div>
      <div class="bar" style="padding-left:6px;padding-bottom:2px;height:30px">
        <span style="width:36px;white-space:nowrap">锁定：</span>
        <ps-icon name="checker"></ps-icon><ps-icon name="lockbrush" style="margin:0 6px"></ps-icon><ps-icon name="lockmove"></ps-icon><ps-icon name="lock" size="14" style="margin-left:7px"></ps-icon>
        <span style="margin-left:auto;width:34px;white-space:nowrap">填充：</span><ps-number>100%</ps-number>
      </div>
      <div class="area">
        <div class="list">
          <ps-layer selected>
            <i slot="thumb" class="thumb alpha">
              <svg class="frame" width="36" height="36"><path d="M.500 12V.500H12M24 .500h11.500V12M35.500 24v11.500H24M12 35.500H.500V24" fill="none" stroke="#fff"/></svg>
              <svg class="orange" width="20" height="20"><circle cx="9" cy="11" r="6.500" fill="#f7a11b"/><ellipse cx="5" cy="14" rx="5" ry="3" fill="#ffb52c"/><path d="M5 11l5 4-5 1z" fill="#ffd05a"/><path d="M6 4c3-5 8-4 11-1-3 3-7 3-11 1z" fill="#3c8b2c"/></svg>
              <ps-icon class="badge" name="smart" size="14"></ps-icon>
            </i>
            093ddacfe9ad43f24e...
            <span slot="end" class="fx">fx</span>
            <i slot="end" class="handle"><svg width="6" height="4"><path d="M0 4h6L3 0z" fill="#333"/></svg></i>
          </ps-layer>
          <div class="effects">
            <div class="gut"></div>
            <div><p><ps-icon name="eye"></ps-icon>效果</p><p><ps-icon name="eye"></ps-icon>投影</p></div>
          </div>
          <ps-layer off>
            <i slot="thumb" class="thumb alpha"><svg width="30" height="30"><defs><radialGradient id="s"><stop stop-color="#555"/><stop offset="1" stop-color="#999" stop-opacity="0"/></radialGradient></defs><ellipse cx="16" cy="22.500" rx="10" ry="2" fill="url(#s)"/></svg></i>
            图层 1
          </ps-layer>
          <ps-layer style="height:40px;padding-bottom:1px">
            <i slot="thumb" class="thumb" style="background:#fff"></i>
            <span style="font-style:italic;margin-left:2px">背景</span>
            <ps-icon slot="end" name="openlock" size="14" style="margin-right:15px"></ps-icon>
          </ps-layer>
        </div>
        <div class="scroll"></div>
      </div>
      <div class="foot">
        <span><ps-icon name="link"></ps-icon></span><span style="font:italic bold 14px 'Liberation Serif',serif">fx.</span><span><ps-icon name="addmask" size="14"></ps-icon></span><span><ps-icon name="adjust"></ps-icon></span><span><ps-icon name="folder" size="15"></ps-icon></span><span><ps-icon name="newlayer" size="15"></ps-icon></span><span><ps-icon name="trash" size="14"></ps-icon></span>
      </div>
    `;
  }
}

class PsDock extends HTMLElement {
  connectedCallback() {
    this.attachShadow({ mode: 'open' }).innerHTML = `
      <style>
        :host { display: flex; flex-direction: column; width: 242px; }
        .head { height: 11px; background: #383838; display: flex; justify-content: flex-end; border-left: 1px solid #2b2b2b; }
        .head svg { margin: 2px 4px 0 0; }
        ps-panel { margin-bottom: 1px; }
      </style>
      <div class="head"><svg width="9" height="8"><path d="M1 1l3 3-3 3zM5 1l3 3-3 3z" fill="#ccc"/></svg></div>
      <ps-panel tabs="颜色,色板" tab-width="38.500" style="height:131px"><ps-color></ps-color></ps-panel>
      <ps-panel tabs="调整,样式" style="height:131px"><ps-adjust></ps-adjust></ps-panel>
      <ps-panel tabs="图层,通道,路径,字符,段落" style="flex:1;min-height:0;margin-bottom:0"><ps-layers></ps-layers></ps-panel>
    `;
  }
}

class PsMenu extends HTMLElement {
  connectedCallback() {
    this.attachShadow({ mode: 'open' }).innerHTML = `
      <style>
        :host { display: block; position: absolute; box-sizing: border-box; padding: 2px; background: #f0f0f0; border: 1px solid #a0a0a0; box-shadow: 3px 3px 4px rgba(0, 0, 0, .5); color: #000; font-size: 15px; }
      </style>
      <slot></slot>
    `;
  }
}

class PsItem extends HTMLElement {
  connectedCallback() {
    const key = this.getAttribute('key') || '';
    this.attachShadow({ mode: 'open' }).innerHTML = `
      <style>
        :host { display: flex; height: 24px; line-height: 25px; padding: 0 15px 0 20.5px; white-space: nowrap; position: relative; letter-spacing: .13px; }
        :host([disabled]) { color: #6d6d6d; }
        :host([active]) { background: #0078d7; color: #fff; }
        .key { margin-left: auto; letter-spacing: .75px; }
        svg { position: absolute; fill: currentColor; }
        .arrow { right: 7px; top: 5px; }
        .check { left: 2px; top: 7px; }
      </style>
      <slot></slot>
      ${key ? `<span class="key">${key}</span>` : ''}
      ${this.hasAttribute('sub') ? `<svg class="arrow" width="6" height="10"><path d="${this.hasAttribute('disabled') ? 'M1 2v7l4-3.500z' : 'M0 0v10l5.500-5z'}"/></svg>` : ''}
      ${this.hasAttribute('checked') ? '<svg class="check" width="10" height="10"><path d="M0 4l3 2 5-5 1.500 1L4 9.500H2z"/></svg>' : ''}
    `;
  }
}

class PsSep extends HTMLElement {
  connectedCallback() {
    this.attachShadow({ mode: 'open' }).innerHTML = `
      <style>
        :host { display: block; height: 12px; padding: 5px 1px 0; box-sizing: border-box; }
        div { height: 1px; background: #a0a0a0; border-bottom: 1px solid #fff; }
      </style>
      <div></div>
    `;
  }
}

// Red pointers and the site mark, drawn above the whole window
class PsOverlay extends HTMLElement {
  connectedCallback() {
    this.attachShadow({ mode: 'open' }).innerHTML = `
      <style>
        :host { position: absolute; left: 0; top: 0; pointer-events: none; }
        svg { display: block; }
      </style>
      <svg width="1073" height="863">
        <g fill="#fe3a38">
          <path d="M209 31l3 26-8.500-3L131.500 247l-1-.5L195 51.500l-6-2.500z"/>
          <path d="M375.500 167l8.500 25-6-1.500L336.500 457h-1L368 190l-6-1z"/>
          <path d="M675 520l8-24.500 4.500 4.500L865 326.500l.5.500L694.500 507l4.500 4.500z"/>
        </g>
        <g fill="#cbcbcb">
          <text x="823" y="807" textLength="66" lengthAdjust="spacingAndGlyphs" font-family="Liberation Sans, sans-serif" font-weight="bold" font-size="44">Bai</text>
          <ellipse cx="896" cy="771.500" rx="7" ry="9.500"/>
          <ellipse cx="909.500" cy="758" rx="6.500" ry="9.500"/>
          <ellipse cx="926.500" cy="759" rx="7" ry="9.500" transform="rotate(12 926.500 759)"/>
          <ellipse cx="937" cy="775.500" rx="7" ry="9.500"/>
          <path d="M916 773c10 0 11 10 18 16 9 8 6 20-6 19-6-1-18-1-24 0-12 1-14-11-6-19 7-6 8-16 18-16z"/>
          <text x="947" y="804" textLength="64" lengthAdjust="spacingAndGlyphs" font-family="Noto Sans CJK SC, sans-serif" font-weight="900" font-size="32">经验</text>
          <text x="825" y="833" textLength="189" lengthAdjust="spacingAndGlyphs" font-family="Open Sans, sans-serif" font-weight="600" font-size="22">jingyan.baidu.com</text>
        </g>
        <text x="900" y="803" textLength="31" lengthAdjust="spacingAndGlyphs" font-family="Liberation Sans, sans-serif" font-weight="bold" font-size="27" fill="#474747">du</text>
      </svg>
    `;
  }
}

class PsApp extends HTMLElement {
  connectedCallback() {
    this.attachShadow({ mode: 'open' }).innerHTML = `
      <style>
        :host { display: flex; flex-direction: column; position: relative; box-sizing: border-box; width: 1073px; height: 863px; overflow: hidden; background: #535353; border: 1px solid #0c0c0c; border-radius: 4px 6px 0 0; }
        .work { flex: 1; min-height: 0; display: flex; padding: 0 0 3px 3px; }
      </style>
      <ps-menubar></ps-menubar>
      <ps-options></ps-options>
      <div class="work">
        <ps-toolbox></ps-toolbox>
        <ps-document></ps-document>
        <ps-strip><ps-icon name="hist2"></ps-icon></ps-strip>
        <ps-strip><ps-icon name="props"></ps-icon></ps-strip>
        <ps-dock></ps-dock>
      </div>
      <ps-menu style="left:207px;top:25px;width:292px;height:850px">
        <ps-item sub>新建(N)</ps-item>
        <ps-item>复制图层(D)...</ps-item>
        <ps-item sub>删除</ps-item>
        <ps-sep></ps-sep>
        <ps-item>重命名图层...</ps-item>
        <ps-item sub active>图层样式(Y)</ps-item>
        <ps-item sub disabled>智能滤镜</ps-item>
        <ps-sep></ps-sep>
        <ps-item sub>新建填充图层(W)</ps-item>
        <ps-item sub>新建调整图层(J)</ps-item>
        <ps-item disabled>图层内容选项(O)...</ps-item>
        <ps-sep></ps-sep>
        <ps-item sub>图层蒙版(M)</ps-item>
        <ps-item sub>矢量蒙版(V)</ps-item>
        <ps-item key="Alt+Ctrl+G">创建剪贴蒙版(C)</ps-item>
        <ps-sep></ps-sep>
        <ps-item sub>智能对象</ps-item>
        <ps-item sub>视频图层</ps-item>
        <ps-item sub>栅格化(Z)</ps-item>
        <ps-sep></ps-sep>
        <ps-item>新建基于图层的切片(B)</ps-item>
        <ps-sep></ps-sep>
        <ps-item key="Ctrl+G">图层编组(G)</ps-item>
        <ps-item disabled key="Shift+Ctrl+G">取消图层编组(U)</ps-item>
        <ps-item>隐藏图层(R)</ps-item>
        <ps-sep></ps-sep>
        <ps-item sub>排列(A)</ps-item>
        <ps-item sub disabled>合并形状(H)</ps-item>
        <ps-sep></ps-sep>
        <ps-item sub disabled>对齐(I)</ps-item>
        <ps-item sub disabled>分布(T)</ps-item>
        <ps-sep></ps-sep>
        <ps-item disabled>锁定组内的所有图层(X)...</ps-item>
        <ps-sep></ps-sep>
        <ps-item disabled>链接图层(K)</ps-item>
        <ps-item disabled>选择链接图层(S)</ps-item>
        <ps-sep></ps-sep>
        <ps-item disabled key="Ctrl+E">合并图层(E)</ps-item>
        <ps-item key="Shift+Ctrl+E">合并可见图层</ps-item>
        <ps-item>拼合图像(F)</ps-item>
        <ps-sep></ps-sep>
      </ps-menu>
      <ps-menu style="left:493px;top:133px;width:185px;height:474px">
        <ps-item>混合选项(N)...</ps-item>
        <ps-sep></ps-sep>
        <ps-item>斜面和浮雕(B)...</ps-item>
        <ps-item>描边(K)...</ps-item>
        <ps-item>内阴影(I)...</ps-item>
        <ps-item>内发光(W)...</ps-item>
        <ps-item>光泽(T)...</ps-item>
        <ps-item>颜色叠加(V)...</ps-item>
        <ps-item>渐变叠加(G)...</ps-item>
        <ps-item>图案叠加(Y)...</ps-item>
        <ps-item>外发光(O)...</ps-item>
        <ps-item checked>投影(D)...</ps-item>
        <ps-sep></ps-sep>
        <ps-item>拷贝图层样式(C)</ps-item>
        <ps-item disabled>粘贴图层样式(P)</ps-item>
        <ps-item>清除图层样式(A)</ps-item>
        <ps-sep></ps-sep>
        <ps-item>全局光(L)...</ps-item>
        <ps-item active>创建图层(R)</ps-item>
        <ps-item>隐藏所有效果(H)</ps-item>
        <ps-item>缩放效果(F)...</ps-item>
      </ps-menu>
      <ps-overlay style="left:-1px;top:-1px"></ps-overlay>
    `;
  }
}

customElements.define('ps-icon', PsIcon);
customElements.define('ps-menubar', PsMenubar);
customElements.define('ps-options', PsOptions);
customElements.define('ps-toolbox', PsToolbox);
customElements.define('ps-ruler', PsRuler);
customElements.define('ps-document', PsDocument);
customElements.define('ps-strip', PsStrip);
customElements.define('ps-panel', PsPanel);
customElements.define('ps-color', PsColor);
customElements.define('ps-adjust', PsAdjust);
customElements.define('ps-select', PsSelect);
customElements.define('ps-number', PsNumber);
customElements.define('ps-layer', PsLayer);
customElements.define('ps-layers', PsLayers);
customElements.define('ps-dock', PsDock);
customElements.define('ps-menu', PsMenu);
customElements.define('ps-item', PsItem);
customElements.define('ps-sep', PsSep);
customElements.define('ps-overlay', PsOverlay);
customElements.define('ps-app', PsApp);
</script>
</body>
</html>
